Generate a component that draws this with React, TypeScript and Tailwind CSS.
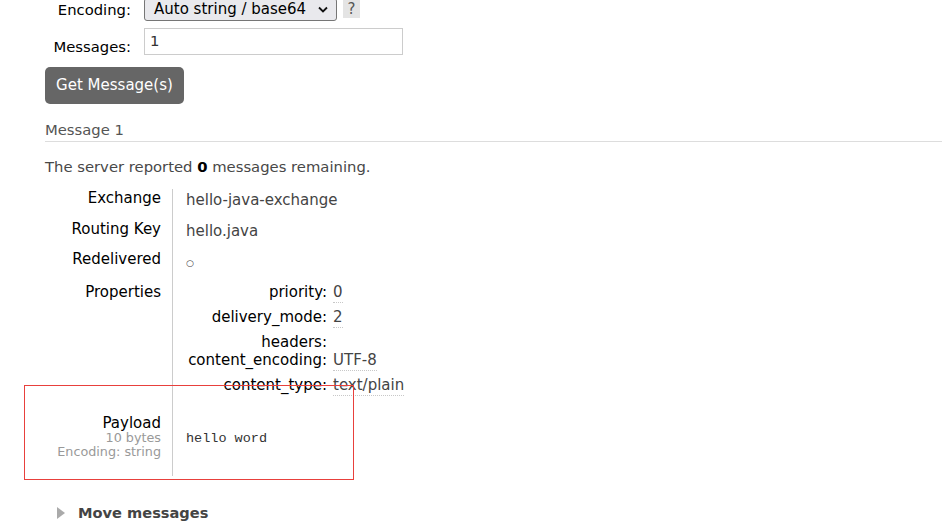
import React from "react";

const font = { fontFamily: '"DejaVu Sans", Verdana, sans-serif' };

function PropRow({ k, v, h }: { k: string; v?: string; h: string }) {
  return (
    <div className={`flex ${h}`}>
      <div className="w-[141px] text-right text-black leading-[17px]">{k}:</div>
      <div className="pl-[6px] leading-[17px]">
        {v ? (
          <span className="border-b border-dotted border-[#c8c8c8] text-[#444] pb-[1px]">{v}</span>
        ) : null}
      </div>
    </div>
  );
}

export default function App() {
  return (
    <div
      className="relative w-[942px] h-[521px] overflow-hidden bg-white text-[14.8px] text-[#484848]"
      style={font}
    >
      <div className="pl-[45px] -mt-[2px]">
        {/* Encoding row */}
        <div className="flex items-start h-[23px]">
          <div className="w-[86px] text-right text-black leading-[17px] pt-[3px]">Encoding:</div>
          <div className="ml-[13px] w-[193px] h-[23px] border border-[#767676] rounded-[3px] bg-[#e9e9ed] flex items-center pl-[9px] pr-[6px] text-black text-[15px] leading-[17px]">
            <span className="flex-1">Auto string / base64</span>
            <svg width="10" height="7" viewBox="0 0 10 7" className="mr-[2px]">
              <path d="M1 1.5 L5 5.5 L9 1.5" fill="none" stroke="#111" strokeWidth="1.8" />
            </svg>
          </div>
          <div className="ml-[6px] mt-[2px] w-[17px] h-[18px] bg-[#e4e4e4] text-[#555] text-[15px] leading-[18px] text-center">
            ?
          </div>
        </div>
        {/* Messages row */}
        <div className="flex items-start mt-[7px]">
          <div className="w-[86px] text-right text-black leading-[17px] pt-[10px]">Messages:</div>
          <div className="ml-[13px] w-[259px] h-[27px] border border-[#cccccc] pl-[5px] pt-[3px] text-[#333] leading-[17px] bg-white">
            1
          </div>
        </div>
        {/* Button */}
        <div className="mt-[12px] w-[139px] h-[37px] rounded-[5px] bg-[#666666] text-white text-[15px] flex items-center justify-center">
          Get Message(s)
        </div>

        {/* Message 1 heading */}
        <div className="mt-[17px] pb-[3px] border-b border-[#dddddd] text-[#555] leading-[17px]">
          Message 1
        </div>
        <div className="mt-[16px] leading-[17px]">
          The server reported <b className="text-black">0</b> messages remaining.
        </div>

        {/* Table */}
        <div className="mt-[14px] flex">
          <div className="w-[128px] border-r border-[#cccccc] pr-[11px] text-right text-black leading-[17px] text-[15px]">
            <div className="h-[31px] pt-[1px]">Exchange</div>
            <div className="h-[30px] pt-[1px]">Routing Key</div>
            <div className="h-[33px] pt-[1px]">Redelivered</div>
            <div className="h-[122px] pt-[1px]">Properties</div>
            <div className="h-[71px] pt-[10.5px]">
              <div className="leading-[15px]">Payload</div>
              <div className="text-[12.75px] leading-[14px] text-[#999]">10 bytes</div>
              <div className="text-[12.75px] leading-[14px] text-[#999]">Encoding: string</div>
            </div>
          </div>
          <div className="pl-[13px] text-[#444] leading-[17px] text-[15px]">
            <div className="h-[31px] pt-[3px]">hello-java-exchange</div>
            <div className="h-[30px] pt-[3px]">hello.java</div>
            <div className="h-[33px] pt-[5px] text-[9px]">○</div>
            <div className="h-[122px] pt-[1px]">
              <PropRow k="priority" v="0" h="h-[25px]" />
              <PropRow k="delivery_mode" v="2" h="h-[25px]" />
              <PropRow k="headers" h="h-[18px]" />
              <PropRow k="content_encoding" v="UTF-8" h="h-[25px]" />
              <PropRow k="content_type" v="text/plain" h="h-[25px]" />
            </div>
            <div
              className="h-[71px] pt-[25px] text-[13.5px] text-[#333]"
              style={{ fontFamily: '"Liberation Mono", monospace' }}
            >
              hello word
            </div>
          </div>
        </div>

        {/* Move messages */}
        <div className="mt-[28px] flex items-center">
          <svg width="8" height="12" viewBox="0 0 8 12" className="ml-[12px]">
            <path d="M0 0 L8 6 L0 12 Z" fill="#aaaaaa" />
          </svg>
          <span className="ml-[13px] font-bold text-[14.6px] text-[#444] leading-[17px]">Move messages</span>
        </div>
      </div>

      {/* annotation box */}
      <div className="absolute left-[24px] top-[385px] w-[330px] h-[95px] border border-[#e8403c]" />
    </div>
  );
}
